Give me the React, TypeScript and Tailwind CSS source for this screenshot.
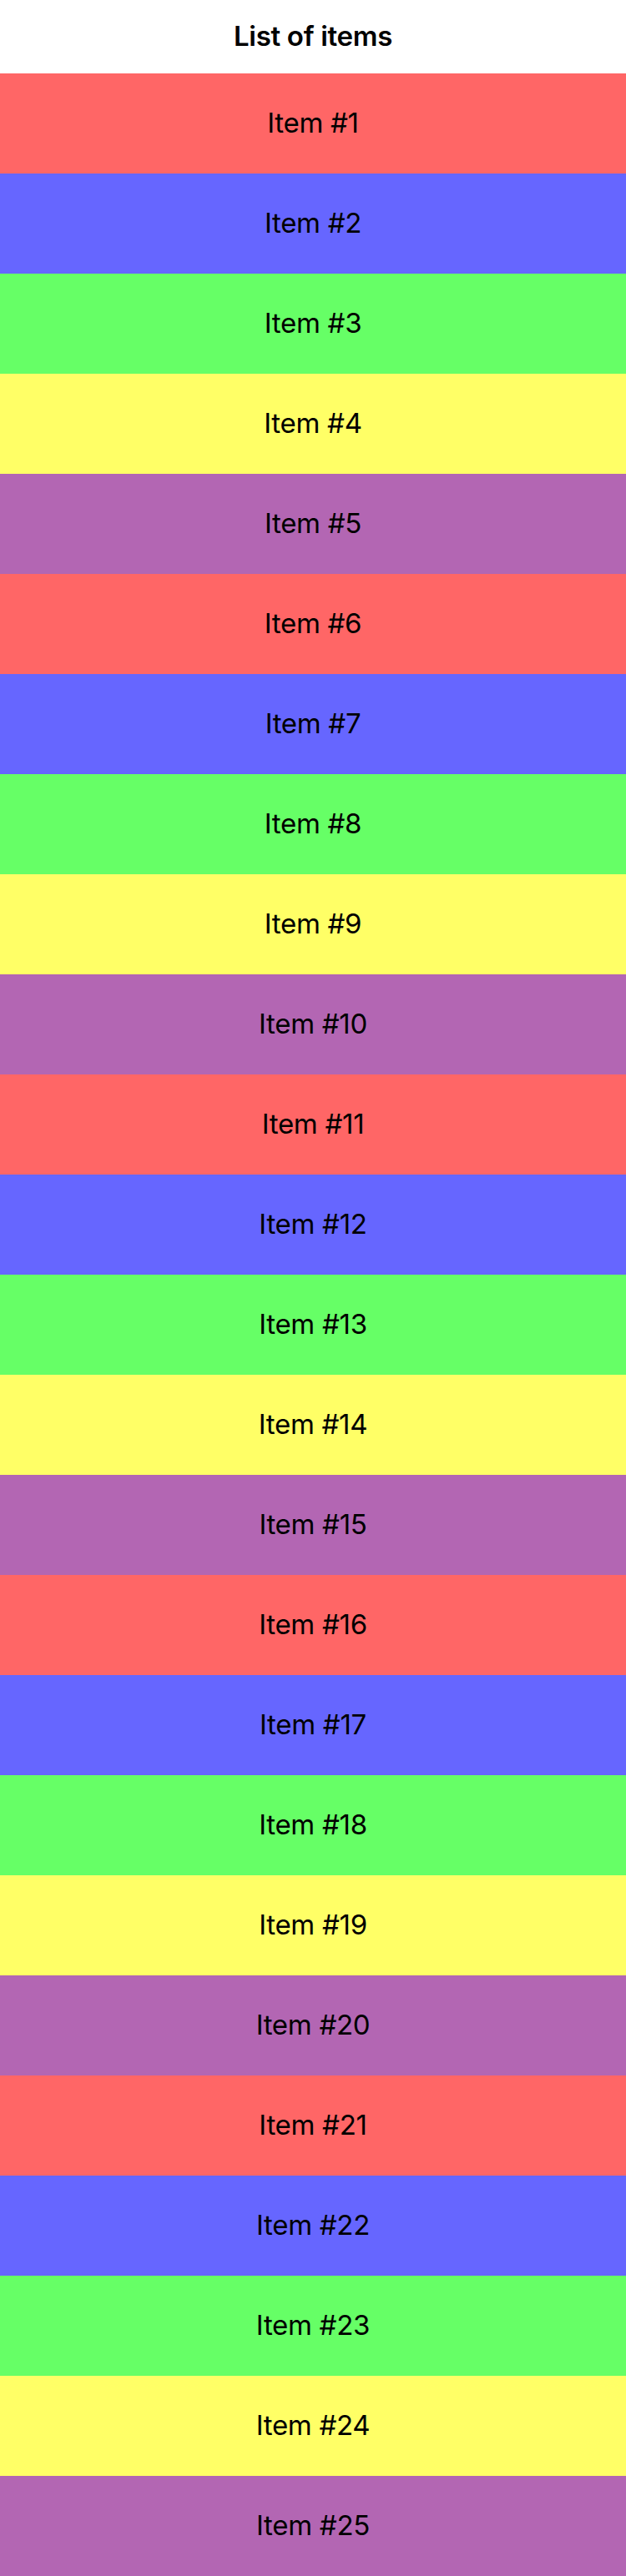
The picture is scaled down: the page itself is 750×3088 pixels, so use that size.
import React from "react";

const colors = [
  "bg-[#ff6666]",
  "bg-[#6666ff]",
  "bg-[#66ff66]",
  "bg-[#ffff66]",
  "bg-[#b366b3]",
];

const items = Array.from({ length: 25 }, (_, i) => i + 1);

function App() {
  return (
    <div className="w-[750px] bg-white font-['Inter',sans-serif] text-black">
      <header className="h-[88px] flex items-center justify-center">
        <h1 className="text-[33px] font-semibold tracking-[-0.3px]">List of items</h1>
      </header>
      <ul>
        {items.map((n, index) => (
          <li
            key={n}
            className={`${colors[index % colors.length]} h-[120px] flex items-center justify-center text-[33px] tracking-[-0.3px]`}
          >
            Item #{n}
          </li>
        ))}
      </ul>
    </div>
  );
}

export default App;
